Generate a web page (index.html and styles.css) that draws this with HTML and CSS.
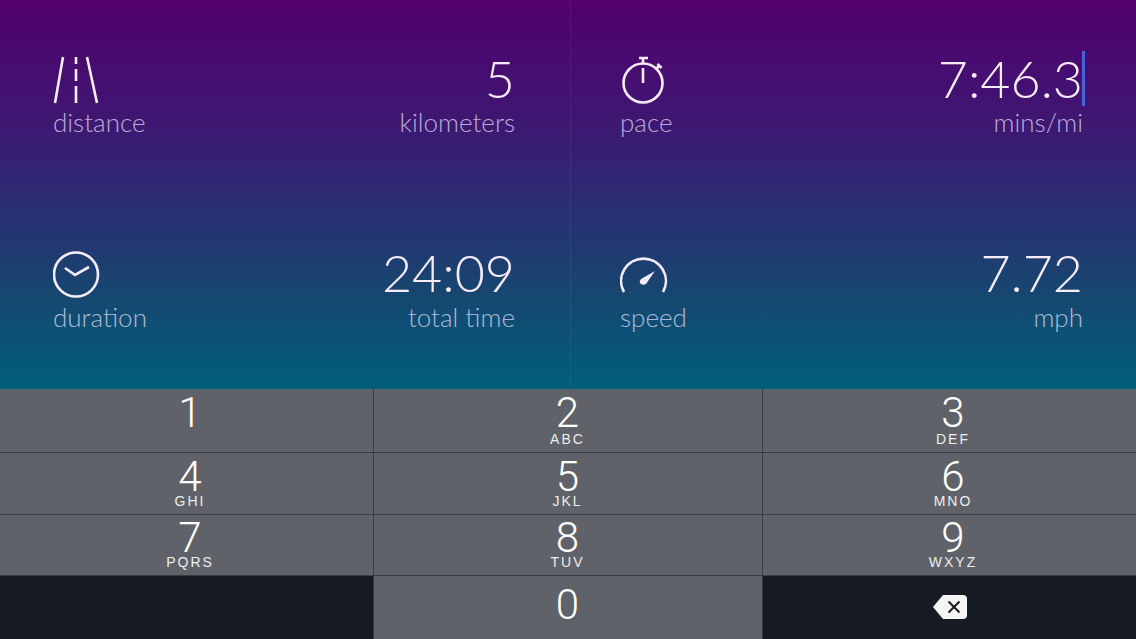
FILE: index.html
```html
<!DOCTYPE html>
<html lang="en">
<head>
  <meta charset="UTF-8">
  <meta name="viewport" content="width=device-width, initial-scale=1.0">
  <link rel="stylesheet" href="styles.css">
</head>
<body>
  <div class="stats">
    <div class="stat">
      <div class="stat-side">
        <svg class="stat-icon" width="48" height="50" viewBox="0 0 48 50">
          <path d="M10 3 L2 49 M34 3 L44 49 M23 3 V10 M23 15 V27 M23 32 V49"/>
        </svg>
        <span class="stat-label">distance</span>
      </div>
      <div class="stat-side stat-right">
        <span class="stat-value">5</span>
        <span class="stat-label">kilometers</span>
      </div>
    </div>
    <div class="stat">
      <div class="stat-side">
        <svg class="stat-icon" width="48" height="50" viewBox="0 0 48 50">
          <circle cx="23" cy="29" r="19.500"/>
          <path d="M23 9 V4 M19 4 H28 M36 15 L39.500 11.500 M37.500 10 L41.500 14 M23 14 V29"/>
        </svg>
        <span class="stat-label">pace</span>
      </div>
      <div class="stat-side stat-right">
        <span class="stat-value">7:46.3<span class="caret"></span></span>
        <span class="stat-label">mins/mi</span>
      </div>
    </div>
    <div class="stat">
      <div class="stat-side">
        <svg class="stat-icon" width="48" height="50" viewBox="0 0 48 50">
          <circle cx="23" cy="25.500" r="22"/>
          <path d="M12 19 L22 26 L36 18"/>
        </svg>
        <span class="stat-label">duration</span>
      </div>
      <div class="stat-side stat-right">
        <span class="stat-value">24:09</span>
        <span class="stat-label">total time</span>
      </div>
    </div>
    <div class="stat">
      <div class="stat-side">
        <svg class="stat-icon" width="48" height="50" viewBox="0 0 48 50">
          <path d="M4 43 A22.400 22.400 0 1 1 43 43"/>
          <path class="needle" d="M35 22 L26 35 Q22 37 20 34 Q19 32 21 30 Z"/>
        </svg>
        <span class="stat-label">speed</span>
      </div>
      <div class="stat-side stat-right">
        <span class="stat-value">7.72</span>
        <span class="stat-label">mph</span>
      </div>
    </div>
  </div>

  <div class="keypad">
    <div class="key"><span class="key-num">1</span></div>
    <div class="key"><span class="key-num">2</span><span class="key-letters">ABC</span></div>
    <div class="key"><span class="key-num">3</span><span class="key-letters">DEF</span></div>
    <div class="key"><span class="key-num">4</span><span class="key-letters">GHI</span></div>
    <div class="key"><span class="key-num">5</span><span class="key-letters">JKL</span></div>
    <div class="key"><span class="key-num">6</span><span class="key-letters">MNO</span></div>
    <div class="key key-low"><span class="key-num">7</span><span class="key-letters">PQRS</span></div>
    <div class="key key-low"><span class="key-num">8</span><span class="key-letters">TUV</span></div>
    <div class="key key-low"><span class="key-num">9</span><span class="key-letters">WXYZ</span></div>
    <div class="key key-dark"></div>
    <div class="key key-zero"><span class="key-num">0</span></div>
    <div class="key key-dark">
      <svg class="back-icon" width="36" height="26" viewBox="0 0 36 26">
        <path class="back-body" d="M11 1 H31 Q35 1 35 5 V21 Q35 25 31 25 H11 L1 13 Z"/>
        <path class="back-x" d="M16.500 7.500 L27.500 18.500 M27.500 7.500 L16.500 18.500"/>
      </svg>
    </div>
  </div>
</body>
</html>
```

FILE: styles.css
```css
body {
  margin: 0;
  width: 1136px;
  height: 639px;
  overflow: hidden;
  display: flex;
  flex-direction: column;
  font-family: "Lato", "Open Sans", sans-serif;
  background-color: #5f6369;
}

.stats {
  height: 389px;
  box-sizing: border-box;
  display: grid;
  grid-template-columns: 570px 566px;
  grid-template-rows: 194px 195px;
  background: linear-gradient(180deg, #52006e 0%, #3f1672 30%, #2b2d74 52%, #17466f 75%, #005f7c 100%);
}

.stat {
  display: flex;
  justify-content: space-between;
  padding: 54px 55px 0 53px;
}
.stat:nth-child(even) {
  border-left: 1px solid rgba(255, 255, 255, 0.05);
  padding-left: 49px;
  padding-right: 53px;
}
.stat:nth-child(n+3) {
  padding-top: 55px;
}

.stat-side {
  display: flex;
  flex-direction: column;
}
.stat-right {
  align-items: flex-end;
}

.stat-icon {
  fill: none;
  stroke: #f6ecf8;
  stroke-width: 2.6;
  display: block;
}
.stat-icon .needle {
  fill: #f6ecf8;
  stroke: none;
}

.stat-label {
  font-size: 26px;
  font-weight: 300;
  line-height: 30px;
  margin-top: 3px;
  color: rgba(230, 225, 255, 0.74);
}

.stat-value {
  position: relative;
  font-size: 52px;
  font-weight: 300;
  line-height: 50px;
  margin-top: -1px;
  margin-bottom: 1px;
  color: #f6ecf8;
}
.stat:nth-child(n+3) .stat-value {
  margin-top: -2px;
  margin-bottom: 2px;
}

.caret {
  position: absolute;
  top: -2px;
  right: -2px;
  width: 3px;
  height: 55px;
  background-color: #4a62d8;
}

.keypad {
  flex: 1;
  display: grid;
  grid-template-columns: 374px 389px 373px;
  grid-template-rows: 64px 62px 61px 63px;
  font-family: "Liberation Sans", Arial, sans-serif;
  color: white;
}

.key {
  box-sizing: border-box;
  display: flex;
  flex-direction: column;
  align-items: center;
  justify-content: flex-start;
  padding-top: 3px;
  background-color: #5f6369;
  border-bottom: 1px solid #3a3c42;
  border-right: 1px solid #3a3c42;
}
.key:nth-child(3n) {
  border-right: none;
}
.key:nth-child(3n+1),
.key:nth-child(3n) {
  padding-left: 7px;
}
.key:nth-child(3n+2) {
  padding-right: 1px;
}
.key:nth-last-child(-n+3) {
  border-bottom: none;
}

.key-low {
  padding-top: 2px;
}
.key-zero {
  padding-top: 8px;
}

.key-num {
  font-family: "Roboto", "Liberation Sans", sans-serif;
  font-size: 42px;
  font-weight: 300;
  line-height: 41px;
}
.key-letters {
  font-size: 14px;
  line-height: 16px;
  letter-spacing: 2px;
  margin-top: -4px;
  color: #eceded;
}
.key:nth-child(-n+3) .key-letters {
  margin-top: -2px;
}

.key-dark {
  background-color: #171c24;
  justify-content: center;
  padding: 0 !important;
}

.back-icon {
  margin-bottom: 2px;
}
.back-body {
  fill: #f5f5f5;
}
.back-x {
  fill: none;
  stroke: #171c24;
  stroke-width: 2;
}
```
